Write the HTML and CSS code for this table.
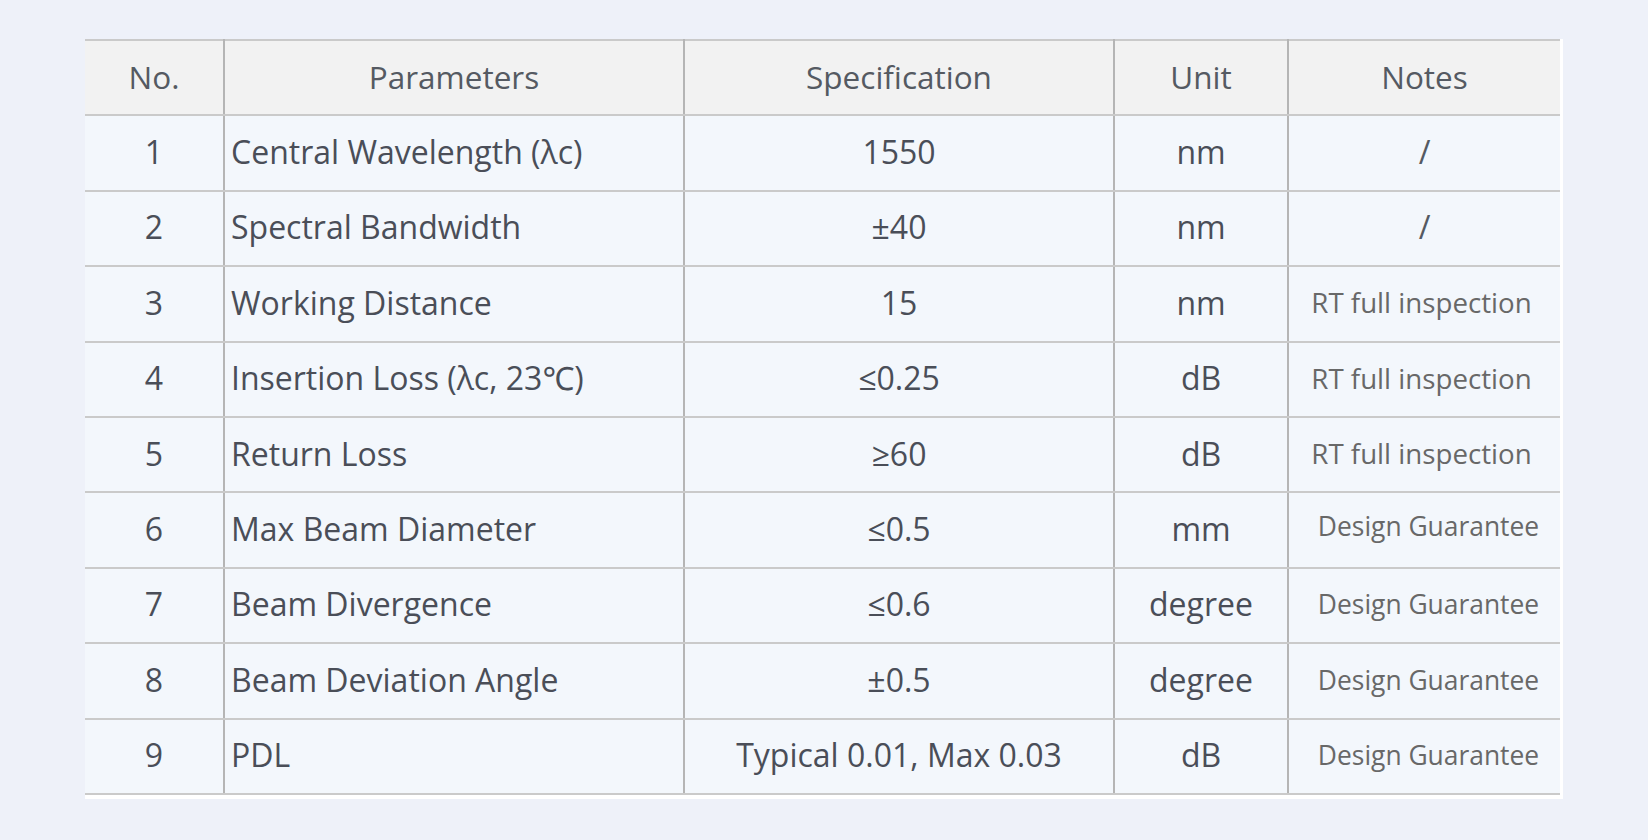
FILE: index.html
```html
<!DOCTYPE html>
<html><head><meta charset="utf-8"><link rel="stylesheet" href="styles.css"></head>
<body>
<main class="page">
  <div class="wrap">
    <table class="spec">
      <colgroup>
        <col class="c-no"><col class="c-param"><col class="c-spec"><col class="c-unit"><col class="c-notes">
      </colgroup>
      <thead>
        <tr><th>No.</th><th>Parameters</th><th>Specification</th><th>Unit</th><th>Notes</th></tr>
      </thead>
      <tbody>
        <tr><td>1</td><td class="param">Central Wavelength (λc)</td><td>1550</td><td>nm</td><td class="note">/</td></tr>
        <tr><td>2</td><td class="param">Spectral Bandwidth</td><td>±40</td><td>nm</td><td class="note">/</td></tr>
        <tr><td>3</td><td class="param">Working Distance</td><td>15</td><td>nm</td><td class="note rt">RT full inspection</td></tr>
        <tr><td>4</td><td class="param">Insertion Loss (λc, 23℃)</td><td>≤0.25</td><td>dB</td><td class="note rt">RT full inspection</td></tr>
        <tr><td>5</td><td class="param">Return Loss</td><td>≥60</td><td>dB</td><td class="note rt">RT full inspection</td></tr>
        <tr><td>6</td><td class="param">Max Beam Diameter</td><td>≤0.5</td><td>mm</td><td class="note dg raised">Design Guarantee</td></tr>
        <tr><td>7</td><td class="param">Beam Divergence</td><td>≤0.6</td><td>degree</td><td class="note dg">Design Guarantee</td></tr>
        <tr><td>8</td><td class="param">Beam Deviation Angle</td><td>±0.5</td><td>degree</td><td class="note dg">Design Guarantee</td></tr>
        <tr><td>9</td><td class="param">PDL</td><td>Typical 0.01, Max 0.03</td><td>dB</td><td class="note dg">Design Guarantee</td></tr>
      </tbody>
    </table>
  </div>
</main>
</body></html>
```
FILE: styles.css
```css
html,body{margin:0;padding:0;}
body{background:#eef1f9;font-family:"Open Sans","Noto Sans",sans-serif;color:#4a4e58;}
.page{padding:39px 0 0 85px;}
.wrap{display:inline-block;background:#fff;padding:0 3px 4px 0;}
.spec{border-collapse:collapse;table-layout:fixed;width:1475px;font-size:32px;}
.c-no{width:139px}
.c-param{width:460px}
.c-spec{width:430px}
.c-unit{width:174px}
.c-notes{width:272px}
.spec th,.spec td{
  border-top:2px solid #cacaca;border-bottom:2px solid #cacaca;
  border-left:2px solid #b5b5b5;border-right:2px solid #b5b5b5;
  text-align:center;vertical-align:middle;padding:0 0 3px 0;white-space:nowrap;
  font-weight:400;
}
.spec tr{height:75.4px;}
.spec tr > :first-child{border-left:none;}
.spec tr > :last-child{border-right:none;}
.spec th{background:#f2f2f2;color:#555a62;font-size:31.5px;}
.spec td{background:#f3f7fc;}
.spec td.param{text-align:left;padding-left:6px;}
.spec td.note{color:#555a62;}
.spec td.rt{font-size:27.7px;color:#686868;padding-right:6px;}
.spec td.dg{font-size:26.4px;color:#686868;padding-left:8px;padding-bottom:2px;}
.spec td.dg.raised{padding-bottom:8px;}
```
